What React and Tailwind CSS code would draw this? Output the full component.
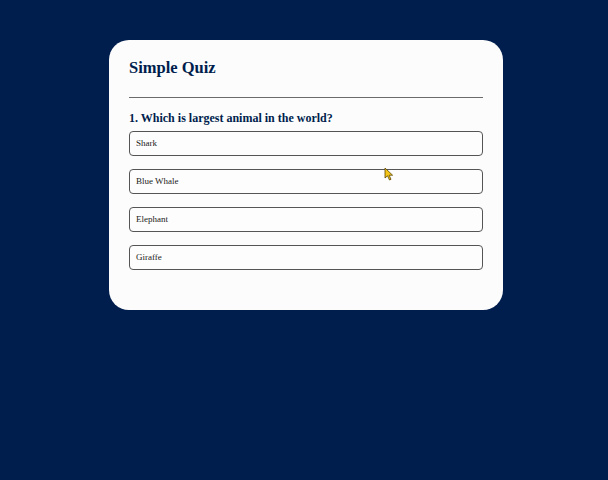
import React from 'react';

const answers = ['Shark', 'Blue Whale', 'Elephant', 'Giraffe'];

export default function App() {
    return (
        <div className="relative w-[608px] h-[480px] bg-[#001e4d] pt-[40px] overflow-hidden">
            {/* Quiz card */}
            <div className="ml-[109px] w-[394px] bg-[#fcfcfc] rounded-[20px] px-[20px] pt-[18px] pb-[40px] font-['Liberation_Serif',serif]">
                <h1 className="text-[16.5px] leading-[20px] font-bold text-[#001e4d]">Simple Quiz</h1>
                <div className="mt-[19px] border-t border-[#6b6b6b]"></div>

                <h2 className="mt-[12px] text-[12px] leading-[16px] font-bold text-[#001e4d]">
                    1. Which is largest animal in the world?
                </h2>

                <div className="mt-[5px] flex flex-col gap-[13px]">
                    {answers.map((a) => (
                        <button
                            key={a}
                            className="h-[25px] w-full text-left px-[6px] border border-[#555] rounded-[4px] bg-[#fdfdfd] text-[9px] text-[#222]"
                        >
                            {a}
                        </button>
                    ))}
                </div>
            </div>

            {/* Mouse cursor */}
            <svg className="absolute left-[384px] top-[167px]" width="11" height="14" viewBox="0 0 11 14">
                <path d="M1 1 L1 11 L3.5 8.8 L5.5 13 L7 12.3 L5.1 8.2 L8.6 8.2 Z" fill="#f5c518" stroke="#5a4500" strokeWidth="0.8" strokeLinejoin="round" />
            </svg>
        </div>
    );
}
